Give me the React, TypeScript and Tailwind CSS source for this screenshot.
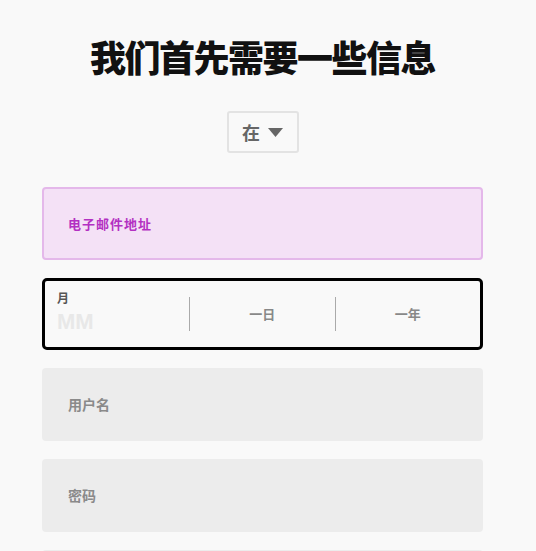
import React from "react";

const cjk = { fontFamily: '"Noto Sans CJK SC", "Noto Sans", sans-serif' };

const GrayField: React.FC<{ label: string }> = ({ label }) => (
    <div className="h-[73px] w-full rounded-[4px] bg-[#ececec] flex items-center pl-[26px]">
        <span className="text-[14px] font-bold text-[#8a8a8a]">{label}</span>
    </div>
);

const App: React.FC = () => {
    return (
        <div className="min-h-screen bg-[#f9f9f9] overflow-hidden" style={cjk}>
            <div className="ml-[42px] w-[441px] flex flex-col">
                <h1 className="pt-[33px] text-center text-[36px] leading-[46px] font-black tracking-[-1.5px] text-[#111]">
                    我们首先需要一些信息
                </h1>

                <div className="mt-[32px] flex justify-center">
                    <button className="h-[42px] w-[72px] rounded-[3px] border-2 border-[#e3e3e3] bg-[#f9f9f9] flex items-center justify-center gap-[8px]">
                        <span className="text-[18px] font-bold text-[#666]">在</span>
                        <svg width="15" height="9" viewBox="0 0 15 9">
                            <path d="M0 0 L15 0 L7.5 9 Z" fill="#666" />
                        </svg>
                    </button>
                </div>

                <div className="mt-[34px] h-[73px] rounded-[4px] border-2 border-[#e4b8ea] bg-[#f4e1f6] flex items-center pl-[24px]">
                    <span className="text-[13px] font-bold text-[#b330c2] tracking-[1px]">电子邮件地址</span>
                </div>

                <div className="mt-[18px] h-[72px] rounded-[5px] border-[3px] border-black bg-[#f9f9f9] flex items-center">
                    <div className="w-[144px] pl-[12px] flex flex-col">
                        <span className="-mt-[4px] text-[12px] leading-[14px] font-bold text-[#555]">月</span>
                        <span className="mt-[6px] text-[22px] leading-[22px] font-bold text-[#e8e8e8]" style={{ fontFamily: '"Liberation Sans", Arial, sans-serif' }}>MM</span>
                    </div>
                    <div className="h-[34px] w-px bg-[#aaa]" />
                    <div className="flex-1 flex justify-center">
                        <span className="text-[13px] font-bold text-[#888]">一日</span>
                    </div>
                    <div className="h-[34px] w-px bg-[#aaa]" />
                    <div className="flex-1 flex justify-center">
                        <span className="text-[13px] font-bold text-[#888]">一年</span>
                    </div>
                </div>

                <div className="mt-[18px]">
                    <GrayField label="用户名" />
                </div>
                <div className="mt-[18px]">
                    <GrayField label="密码" />
                </div>
                <div className="mt-[18px]">
                    <GrayField label="" />
                </div>
            </div>
        </div>
    );
};

export default App;
